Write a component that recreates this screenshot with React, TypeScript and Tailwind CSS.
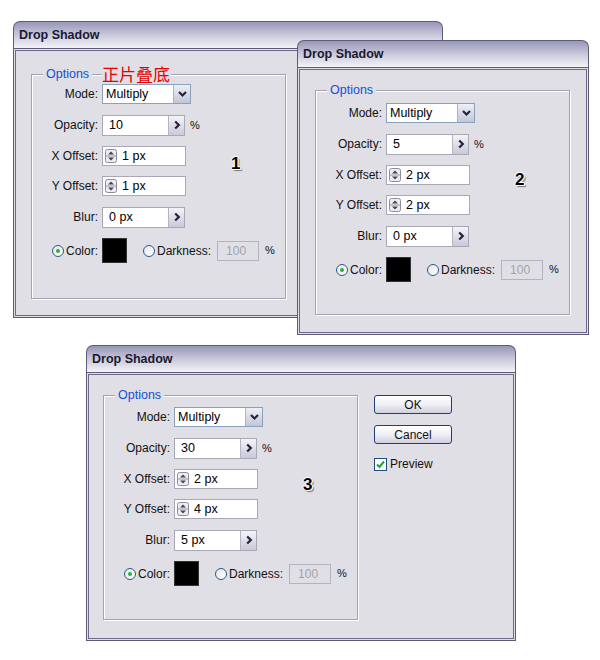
import type { ReactNode } from 'react';

interface Dlg {
  opacity: string;
  xOff: string;
  yOff: string;
  blur: string;
  num: string;
  note?: boolean;
}

const body = 'bg-[#e0dfe5]';

function Stepper() {
  return (
    <svg width="12" height="14" viewBox="0 0 12 14" className="shrink-0">
      <rect x="0.5" y="0.5" width="11" height="13" rx="2" fill="#ececf1" stroke="#8d8c9c" />
      <line x1="1" y1="7" x2="11" y2="7" stroke="#9a99a8" />
      <path d="M3 5.6 L6 2.6 L9 5.6Z" fill="#45445a" />
      <path d="M3 8.4 L6 11.4 L9 8.4Z" fill="#45445a" />
    </svg>
  );
}

function ArrowField({ value, width = 'w-[83px]' }: { value: string; width?: string }) {
  return (
    <div className={`flex h-[21px] ${width} border border-[#a8a8b6] bg-white`}>
      <div className="flex-1 pl-[6px] flex items-center text-[12.5px] text-black">{value}</div>
      <div className="w-[16px] h-full border-l border-[#b4b4c4] bg-gradient-to-b from-[#f4f4f8] to-[#c9c9d8] flex items-center justify-center">
        <svg width="10" height="12" viewBox="0 0 10 12">
          <path d="M3.2 2.5 L6.8 6 L3.2 9.5" stroke="#23223a" strokeWidth="2.2" fill="none" />
        </svg>
      </div>
    </div>
  );
}

function SelectBox() {
  return (
    <div className="flex h-[20px] w-[89px] border border-[#8aa0bc] bg-white">
      <div className="flex-1 pl-[3px] flex items-center text-[12.5px] text-black">Multiply</div>
      <div className="w-[17px] h-full border-l border-[#a9b4cc] bg-gradient-to-b from-[#eef0f6] to-[#c3c6d8] flex items-center justify-center">
        <svg width="11" height="10" viewBox="0 0 11 10">
          <path d="M2 3 L5.5 6.5 L9 3" stroke="#23223a" strokeWidth="2.2" fill="none" />
        </svg>
      </div>
    </div>
  );
}

function OffsetField({ value }: { value: string }) {
  return (
    <div className="flex items-center h-[20px] w-[84px] border border-[#a8a8b6] bg-white pl-[2px]">
      <Stepper />
      <span className="ml-[5px] text-[12.5px] text-black">{value}</span>
    </div>
  );
}

function Radio({ checked }: { checked?: boolean }) {
  return (
    <span className="w-[12px] h-[12px] rounded-full border border-[#2a5a8a] bg-gradient-to-br from-[#e6e6ea] to-white flex items-center justify-center shrink-0">
      {checked && <span className="w-[4px] h-[4px] rounded-full bg-[#22b33a]" />}
    </span>
  );
}

function Row({ label, children, className = '' }: { label: string; children: ReactNode; className?: string }) {
  return (
    <div className={`flex items-center h-[20px] ${className}`}>
      <span className="w-[66px] text-right text-[12px] text-[#111]">{label}</span>
      <div className="ml-[4px] flex items-center">{children}</div>
    </div>
  );
}

function Group({ d, topPad }: { d: Dlg; topPad: string }) {
  return (
    <div className={`relative w-[255px] h-[225px] border border-[#a3a2b1] shadow-[1px_1px_0_#fff,inset_1px_1px_0_#fff] ${topPad}`}>
      <div className="absolute -top-[10px] left-[11px] flex items-center h-[18px]">
        <span className={`${body} px-[3px] text-[12.5px] text-[#1450d8]`}>Options</span>
        {d.note && (
          <span className={`${body} ml-[10px] pr-[1px] text-[17px] leading-[18px] text-[#e60000] font-['Noto_Sans_CJK_SC',sans-serif]`}>
            正片叠底
          </span>
        )}
      </div>

      <Row label="Mode:">
        <SelectBox />
      </Row>
      <Row label="Opacity:" className="mt-[11px]">
        <ArrowField value={d.opacity} />
        <span className="ml-[5px] text-[11px] text-[#111]">%</span>
      </Row>
      <Row label="X Offset:" className="mt-[11px]">
        <OffsetField value={d.xOff} />
      </Row>
      <Row label="Y Offset:" className="mt-[10px]">
        <OffsetField value={d.yOff} />
      </Row>
      <Row label="Blur:" className="mt-[11px]">
        <ArrowField value={d.blur} />
      </Row>

      <div className="flex items-center h-[25px] mt-[11px]">
        <div className="w-[66px] flex items-center justify-end gap-[2px]">
          <Radio checked />
          <span className="text-[12px] text-[#111]">Color:</span>
        </div>
        <div className="ml-[4px] w-[25px] h-[25px] bg-black border border-[#333]" />
        <div className="ml-[16px] flex items-center gap-[2px]">
          <Radio />
          <span className="text-[12px] text-[#111]">Darkness:</span>
        </div>
        <div className="ml-[6px] w-[42px] h-[20px] border border-[#b3b2bf] flex items-center pl-[8px] text-[12px] text-[#a3a2ac]">
          100
        </div>
        <span className="ml-[6px] text-[11px] text-[#111]">%</span>
      </div>

      <span className="absolute left-[199px] top-[76px] text-[17px] font-bold text-black [text-shadow:1px_0_0_#fff,-1px_0_0_#fff,0_-1px_0_#fff,1px_1px_0_#fff,2px_2px_1px_#777]">
        {d.num}
      </span>
    </div>
  );
}

function Window({ pos, children }: { pos: string; children: ReactNode }) {
  return (
    <div className={`absolute flex flex-col ${pos}`}>
      <div className="h-[27px] shrink-0 rounded-t-[7px] border border-b-0 border-[#5d5b77] bg-gradient-to-b from-[#9896b6] via-[#c9c8db] to-[#f3f3f7] flex items-center pl-[5px] pt-[1px] text-[12.5px] font-bold text-[#1a1930]">
        Drop Shadow
      </div>
      <div className={`flex-1 border border-[#5d5b77] p-px ${body}`}>
        <div className="h-full border border-[#6c6a86]">{children}</div>
      </div>
    </div>
  );
}

const d1: Dlg = { opacity: '10', xOff: '1 px', yOff: '1 px', blur: '0 px', num: '1', note: true };
const d2: Dlg = { opacity: '5', xOff: '2 px', yOff: '2 px', blur: '0 px', num: '2' };
const d3: Dlg = { opacity: '30', xOff: '2 px', yOff: '4 px', blur: '5 px', num: '3' };

export default function App() {
  return (
    <div className="relative w-[600px] h-[660px] bg-white font-['Liberation_Sans',Arial,sans-serif] overflow-hidden">
      <Window pos="left-[13px] top-[21px] w-[430px] h-[297px] z-0">
        <div className="pl-[15px] pt-[23px]">
          <Group d={d1} topPad="pt-[9px]" />
        </div>
      </Window>

      <Window pos="left-[297px] top-[40px] w-[292px] h-[295px] z-10">
        <div className="pl-[15px] pt-[20px]">
          <Group d={d2} topPad="pt-[12px]" />
        </div>
      </Window>

      <Window pos="left-[86px] top-[345px] w-[430px] h-[296px] z-10">
        <div className="flex pl-[14px] pt-[20px]">
          <Group d={d3} topPad="pt-[11px]" />
          <div className="ml-[16px] flex flex-col">
            <button className="w-[78px] h-[19px] rounded-[3px] border border-[#1d3f78] bg-gradient-to-b from-white via-[#f0f0f6] to-[#cfcfe0] text-[12px] text-[#111] leading-none">
              OK
            </button>
            <button className="mt-[11px] w-[78px] h-[19px] rounded-[3px] border border-[#1d3f78] bg-gradient-to-b from-white via-[#f0f0f6] to-[#cfcfe0] text-[12px] text-[#111] leading-none">
              Cancel
            </button>
            <div className="mt-[11px] flex items-center gap-[3px]">
              <span className="w-[13px] h-[13px] border border-[#1c4f80] bg-white flex items-center justify-center">
                <svg width="9" height="9" viewBox="0 0 9 9">
                  <path d="M1 4.5 L3.5 7 L8 1.5" stroke="#21a336" strokeWidth="2" fill="none" />
                </svg>
              </span>
              <span className="text-[12px] text-[#111]">Preview</span>
            </div>
          </div>
        </div>
      </Window>
    </div>
  );
}
